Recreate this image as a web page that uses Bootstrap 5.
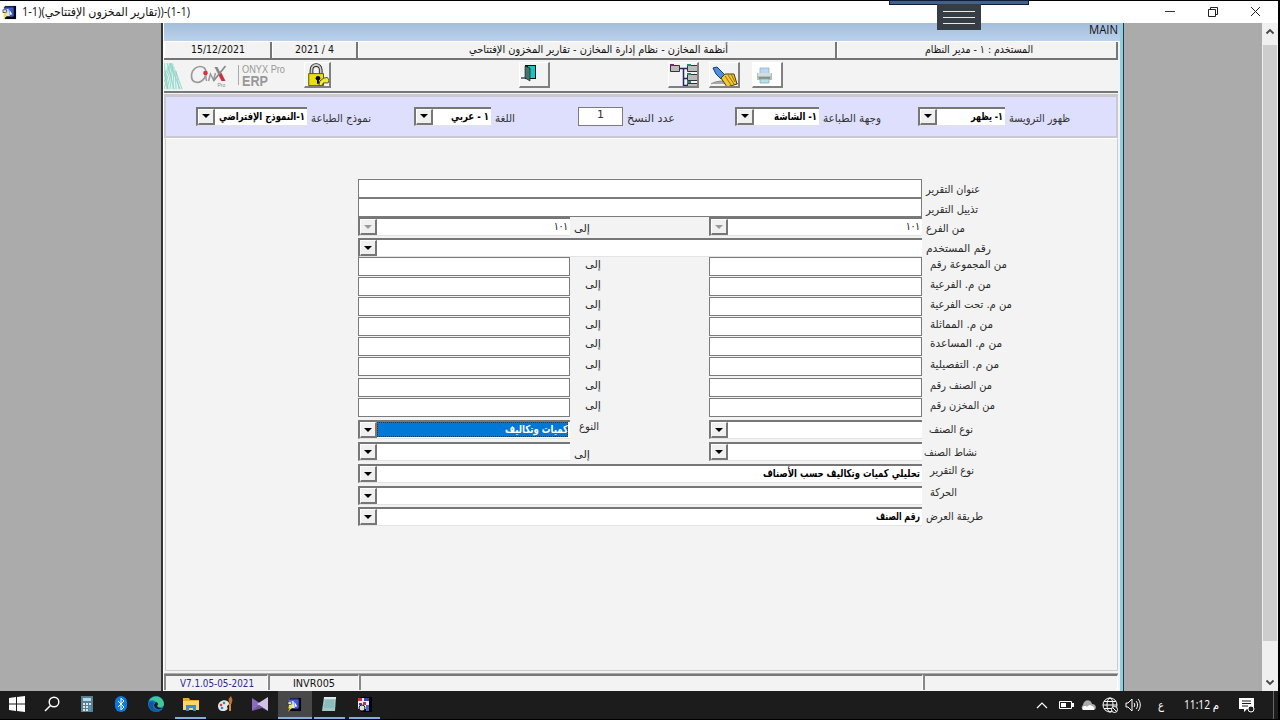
<!DOCTYPE html>
<html lang="ar">
<head>
  <meta charset="UTF-8" />
  <meta name="viewport" content="width=device-width, initial-scale=1.0"/>
  <title>تقارير المخزون الإفتتاحي</title>
  <link href="https://cdn.jsdelivr.net/npm/bootstrap@5.3.0/dist/css/bootstrap.min.css" rel="stylesheet"/>
  <style>
    body { width: 1280px; height: 720px; background: #000; color: #111; font: 11px/1.2 "DejaVu Sans", "Noto Sans", sans-serif; }
    svg { display: block; flex: none; }
    .latin { font-family: "Open Sans", "DejaVu Sans", sans-serif; }

    /* title bar */
    .titlebar { height: 22px; margin-top: 1px; width: 1278px; background: #fff; padding: 0 12px 0 2px; font-size: 12px; }
    .titlebar .fit { margin-left: 5px; }
    .win-buttons { gap: 31px; }
    .top-strip { left: 889px; top: 0; width: 140px; height: 5px; background: #44608f; border: 1px solid #111c38; }
    .top-handle { left: 937px; top: 4px; width: 44px; height: 26px; background: #363d44; padding: 7px 6px 6px; }
    .top-handle i { height: 1px; background: #e8e8e8; }

    /* desktop of the application */
    .desk { height: 668px; width: 1278px; background: #ababab; }
    .erp { width: 963px; margin-left: 161px; background: #f3f3f3; border-left: 2px solid #333; border-right: 1px solid #173f50; }
    .erp-inner { border-right: 3px solid #93ccdb; border-left: 1px solid #fff; }
    .mdi-title { height: 18px; background: linear-gradient(#a3bddb, #bad2ea); padding-right: 2px; font-size: 12px; line-height: 14px; }
    .info-row { height: 19px; background: #f3f3f3; border-bottom: 2px solid #737373; border-top: 1px solid #fff; }
    .info-row > div { border-right: 2px solid #777; border-left: 1px solid #fff; }
    .info-row, .tools, .options, .sheet, .foot { margin-right: 2px; }
    .i1 { width: 108px; } .i2 { width: 86px; } .i3 { width: 479px; padding-left: 2px; }
    .user-cell { padding-left: 4px; }
    .tools { height: 33px; border-bottom: 2px solid #777; padding-top: 2px; }
    .tool-btn { width: 31px; height: 26px; border-right: 2px solid #808080; border-bottom: 2px solid #808080; border-top: 1px solid #fff; border-left: 1px solid #fff; background: #f3f3f3; overflow: hidden; }
    .brand-text { border-left: 1px solid #aaa; padding-left: 3px; color: #989898; font: 10px/10px "Liberation Sans", sans-serif; height: 20px; margin: 3px 0 0 10px; width: 57px; }
    .brand-text b { font-size: 14px; line-height: 12px; }
    .options { height: 44px; margin-top: 1px; background: #dedffc; border: 2px solid #c9c9d4; border-top: 3px solid #c9c9cf; border-left: 2px solid #c9c9cf; padding: 10px 0 0 30px; color: #333; }
    .options label { height: 18px; }
    .opt { height: 18px; }
    .g1 { width: 175px; } .g2 { width: 101px; margin-left: 43px; } .g3 { width: 97px; margin-left: 63px; }
    .g4 { width: 146px; margin-left: 60px; } .g5 { width: 152px; margin-left: 37px; }
    .sheet { height: 533px; margin-left: 1px; border: 1px solid #ccc; border-top-color: #fff; padding: 40px 0 0 192px; }
    .foot { height: 17px; margin-top: 2px; border-top: 1px solid #aaa; }
    .foot > div { border-top: 2px solid #777; border-left: 2px solid #888; border-right: 1px solid #fff; padding-top: 1px; }
    .f1 { width: 104px; } .f2 { width: 91px; } .f3 { width: 564px; }

    /* Forms-style fields */
    .box { height: 19px; background: #fff; border: 1px solid #7b7b7b; }
    .combo { height: 19px; background: #fff; border-top: 2px solid #777; border-left: 2px solid #777; border-bottom: 1px solid #e3e3e3; color: #000; font-weight: bold; }
    .combo .value { padding-right: 2px; }
    .arrow { width: 17px; background: #f0f0f0; border: 1px solid #fff; border-right: 2px solid #777; border-bottom: 2px solid #777; flex: none; }
    .arrow::after { content: ""; border: 4px solid transparent; border-top-color: #000; border-bottom: 0; }
    .arrow.off::after { border-top-color: #999; }
    .picked { background: #0078d7; color: #fff; outline: 1px dotted #333; outline-offset: -1px; margin: 0 2px 1px 0; }
    .lines { display: grid; grid-template-columns: 212px 139px 213px 110px; grid-template-rows: 19px 19px 21px 19px 20px 20px 20px 20px 20px 21px 20px 22px 22px 22px 22px 21px 20px; }
    .wide { grid-column: span 3; }
    .cap { height: 19px; color: #2b2b2b; }
    .fit { display: inline-flex; justify-content: flex-start; white-space: nowrap; flex: none; direction: ltr; }
    .fit > span { transform-origin: 0 50%; flex: none; }

    /* scroll bar and taskbar */
    .scroll { width: 16px; background: #f0f0f0; }
    .thumb { height: 596px; background: #cdcdcd; width: 14px; margin-top: 9px; }
    .taskbar { height: 28px; width: 1278px; background: #1c1c1c; color: #fff; }
    .task { width: 34.7px; height: 28px; border-bottom: 2px solid transparent; }
    .task.open { border-image: linear-gradient(90deg, transparent 12%, #83aede 12% 88%, transparent 88%) 2; border-style: solid; border-width: 0 0 2px; }
    .task.now { background: #484848; border-bottom-color: #83aede; }
    .tray svg { margin-right: 6px; }
    .tray > svg:last-of-type { margin-right: 0; }
    .tray-end { width: 1px; height: 28px; background: #666; margin: 0 4px 0 18px; }

    #lock { margin-left: 9px; width: 27px; } #exit { margin-left: 188px; } #tree { margin-left: 118px; } #clean { margin-left: 10px; } #print { margin-left: 12px; }
    #version { color: #2c2796; }
    #lang { margin-left: 10px; } #clock { margin: 0 20px 0 20px; }
    #clock, #lang { font-size: 12px; }
  </style>
</head>
<body class="overflow-hidden position-relative">
  <svg width="0" height="0" class="position-absolute">
    <symbol id="forms" viewBox="0 0 16 16">
      <path d="M3 1h12v14H3z" fill="#05051c"/><path d="M2 2h10v10H2z" fill="#dce4ff"/><path d="M2 2h10v2H2z" fill="#2638a8"/><path d="M7 4h5v8H8z" fill="#3558e0"/><path d="M8 5l3 5-2 0-1 2z" fill="#fff"/><path d="M1 5h4v3H1z" fill="#ddd" stroke="#222" stroke-width=".7"/><path d="M4 8l-3 4h2l-2 4 5-5H4l2-3z" fill="#f6e611"/>
    </symbol>
  </svg>

  <!-- title bar -->
  <header class="titlebar d-flex align-items-center latin">
    <svg width="15" height="15"><use href="#forms"/></svg>
    <span class="fit" data-w="168"><bdo dir="ltr">1-1)(</bdo><bdi dir="rtl">تقارير المخزون الإفتتاحي</bdi><bdo dir="ltr">))-(1-1)</bdo></span>
    <div class="win-buttons d-flex align-items-center ms-auto me-1">
      <svg width="12" height="12" stroke="#333" fill="none"><path d="M1 5.500h10"/></svg>
      <svg width="12" height="12" stroke="#222" fill="none"><path d="M1.500 3.500h7v7h-7zM3.500 3V1.500h7v7H9"/></svg>
      <svg width="12" height="12" stroke="#222" fill="none"><path d="M1 1l9 9M10 1l-9 9"/></svg>
    </div>
  </header>
  <div class="top-strip position-absolute"></div>
  <div class="top-handle position-absolute d-flex flex-column justify-content-between"><i></i><i></i><i></i></div>

  <div class="desk d-flex">
    <main class="erp">
      <div class="erp-inner h-100">
        <div class="mdi-title text-end latin"><span class="fit" data-w="29">MAIN</span></div>
        <div class="info-row d-flex text-center">
          <div class="i1 d-flex align-items-center justify-content-center"><span class="fit" data-w="54">15/12/2021</span></div>
          <div class="i2 d-flex align-items-center justify-content-center"><span class="fit" data-w="39">2021 / 4</span></div>
          <div class="i3 d-flex align-items-center justify-content-center"><span class="fit" data-w="259"><bdi dir="rtl">أنظمة المخازن - نظام إدارة المخازن - تقارير المخزون الإفتتاحي</bdi></span></div>
          <div class="user-cell flex-grow-1 d-flex align-items-center justify-content-center"><span class="fit" data-w="108"><bdi dir="rtl">المستخدم : ١ - مدير النظام</bdi></span></div>
        </div>
        <div class="tools d-flex">
          <svg width="20" height="28" fill="none" stroke="#8bd0c3" stroke-width=".8"><path d="M0 1h9l3 8 3 10 4 9H0z" fill="#dff3ef" stroke="none"/><path d="M0 27L8 1M3 27L9 2M6 27L9 4M9 27L10 5M12 27L11 8M15 27L12 9M18 27L12 10M0 1l4 26M3 1l7 26M6 1l10 26M0 8l3 19M0 15L6 1M0 20L7 1"/></svg>
          <svg class="ms-1" width="40" height="28" viewBox="0 0 39 28">
            <path d="M16 6C10 2 3 7 3 14c0 7 8 9 13 2 2-3 2-7 0-10" fill="none" stroke="#999" stroke-width="1.700"/>
            <circle cx="17" cy="11" r="2.300" fill="#e02c3c"/><path d="M17 13l1 6M20 19l2-7 3 6 2-7" fill="none" stroke="#999" stroke-width="1.500"/>
            <path d="M26 5l3 0 3 6-2 2z" fill="#888"/><path d="M31 11l2 0 4 8h-4l-3-6z" fill="#d52e3c"/><path d="M37 4L25 19" stroke="#888" stroke-width="1.700"/>
            <text x="29" y="25" font-family="Liberation Sans" font-size="5" fill="#888">Pro</text>
          </svg>
          <div class="brand-text"><span class="fit" data-w="43">ONYX Pro</span><br/><b class="fit" data-w="26">ERP</b></div>
          <div class="tool-btn" id="lock"><svg width="25" height="24" viewBox="0 0 27 25"><path d="M7 13V7c0-7 10-7 10 0v6" fill="none" stroke="#222" stroke-width="4"/><path d="M7 13V7c0-7 10-7 10 0v6" fill="none" stroke="#ccc" stroke-width="2"/><path d="M4 11h16v13H4z" fill="#e9df0a" stroke="#554f00"/><circle cx="14" cy="16" r="2.500"/><path d="M13 17h2v5h-2z"/><path d="M16 19l4-3 4-1 2 3-1 3-5 0-2 3-3 0z" fill="#f4eb2d" stroke="#444"/></svg></div>
          <div class="tool-btn" id="exit"><svg width="29" height="25"><path d="M1 15h15" stroke="#777" stroke-width="2"/><path d="M5 2h11v14H5z" fill="#111"/><path d="M8 3h7v12H8z" fill="#20c2bc"/><path d="M5 3l5 2v13l-5-3z" fill="#43746f" stroke="#111" stroke-width=".6"/></svg></div>
          <div class="tool-btn" id="tree"><svg width="29" height="25"><path d="M10 5.500h9M14.500 5v19M14 15.500h5M14 22.500h5" fill="none" stroke="#24246d" stroke-width="1.500"/><g fill="#bbb" stroke="#333"><path d="M1.500 2.500h9v6h-9zM18.500 2.500h10v6h-10zM18.500 11.500h10v6h-10zM18.500 20.500h10v4h-10z"/></g><path d="M1 1h4v2H1z" fill="#8c1c72"/><path d="M18 1h4v2h-4zM18 10h4v2h-4zM18 18h4v2h-4z" fill="#258976"/></svg></div>
          <div class="tool-btn" id="clean"><svg width="29" height="25"><path d="M1 21c5-4 20-4 27 0" fill="#aaa" stroke="#888"/><path d="M3 5l4-1 8 8-4 4-5-5z" fill="#4a8fe4" stroke="#183878"/><path d="M15 11l9 0 3 10-10 3-6-9z" fill="#f0c83c" stroke="#4d3b04"/><path d="M15 13l6 9M18 12l6 9M21 11l4 8" stroke="#9c6e0b"/></svg></div>
          <div class="tool-btn bg-white" id="print"><svg width="29" height="25"><path d="M7 5h9v7H7z" fill="#b8d9f4" stroke="#8aa8c4" stroke-width=".7"/><path d="M4 10h15v7H4z" fill="#b6bcbc"/><path d="M5 10h13v3H5z" fill="#d8dcda"/><path d="M6 14h11v2H6z" fill="#82958b"/><path d="M7 16h9v4H7z" fill="#b6e0ee" stroke="#86a2aa" stroke-width=".7"/></svg></div>
        </div>
        <div class="options d-flex" id="options"></div>
        <div class="sheet"><div class="lines" id="lines"></div></div>
        <div class="foot d-flex">
          <div class="f1 d-flex justify-content-center align-items-center"><span class="fit" data-w="74" id="version">V7.1.05-05-2021</span></div>
          <div class="f2 d-flex justify-content-center align-items-center"><span class="fit" data-w="42">INVR005</span></div>
          <div class="f3"></div>
          <div class="flex-grow-1"></div>
        </div>
      </div>
    </main>
    <div class="scroll ms-auto d-flex flex-column align-items-center py-1">
      <svg width="10" height="9" fill="none" stroke="#444" stroke-width="1.800"><path d="M1.500 6.500L5 3l3.500 3.500"/></svg>
      <div class="thumb"></div>
      <svg class="mt-auto" width="10" height="9" fill="none" stroke="#444" stroke-width="1.800"><path d="M1.500 2.500L5 6l3.500-3.500"/></svg>
    </div>
  </div>

  <footer class="taskbar d-flex align-items-center">
    <div class="task d-flex align-items-center justify-content-center"><svg width="16" height="16" fill="#fff"><path d="M0 2l7-1v6.500H0zM8 1l8-1v7.500H8zM0 8.500h7V15l-7-1zM8 8.500h8V16l-8-1z"/></svg></div>
    <div class="task d-flex align-items-center justify-content-center"><svg width="16" height="16" fill="none" stroke="#fff" stroke-width="1.400"><circle cx="10" cy="6" r="4.800"/><path d="M6.500 9.500L1 15"/></svg></div>
    <div class="task d-flex align-items-center justify-content-center"><svg width="12" height="16"><path d="M0 0h12v16H0z" fill="#607d8a"/><path d="M2 2h8v3H2z" fill="#a9dcf6"/><path d="M2 7h2v2H2zM5 7h2v2H5zM8 7h2v2H8zM2 10h2v2H2zM5 10h2v2H5zM2 13h2v2H2zM5 13h2v2H5z" fill="#d8e5ec"/><path d="M8 10h2v5H8z" fill="#36a0e2"/></svg></div>
    <div class="task d-flex align-items-center justify-content-center"><svg width="12" height="16"><rect width="12" height="16" rx="6" fill="#0a7ae0"/><path d="M3 5l6 6-3 3V2l3 3-6 6" fill="none" stroke="#fff"/></svg></div>
    <div class="task d-flex align-items-center justify-content-center"><svg width="16" height="16"><circle cx="8" cy="8" r="8" fill="#127ac9"/><path d="M1 5c3-7 14-6 15 3 0 4-6 4-7 2 2-4-4-7-8-5" fill="#42c895"/><path d="M6 7c-3 4 1 9 8 7-7 5-14-1-13-7 1-2 4-2 5 0" fill="#1454a0"/><path d="M8 6c3 1 2 3 1 4 1 2 3 2 5 2-3 3-8 0-8-3z" fill="#1c1c1c"/></svg></div>
    <div class="task open d-flex align-items-center justify-content-center"><svg width="16" height="14"><path d="M0 1h6l1 2h9v10H0z" fill="#e7ab2c"/><path d="M0 4h16v9H0z" fill="#fbd666"/><path d="M3 14V8h10v6h-3v-3H6v3z" fill="#3e8cc8"/></svg></div>
    <div class="task d-flex align-items-center justify-content-center"><svg width="16" height="16"><path d="M1 10c0-6 9-8 11-3 1 2-2 2-2 4 2 2-1 4-4 4s-5-2-5-5" fill="#e2e8ec"/><circle cx="4" cy="9" r="1.300" fill="#d34436"/><circle cx="7" cy="7" r="1.300" fill="#33a05a"/><circle cx="5" cy="12" r="1.300" fill="#3687d0"/><path d="M13 8v7" stroke="#de8736" stroke-width="2"/><path d="M11.500 3L14 0l1.500 4-1 4h-2z" fill="#bb7434"/></svg></div>
    <div class="task d-flex align-items-center justify-content-center"><svg width="16" height="16"><path d="M0 2l9 6-9 7z" fill="#8a6bbf"/><path d="M16 1v14L5 8z" fill="#cfc2e6"/><path d="M0 15l7-6 9 6-6-3z" fill="#77569f"/></svg></div>
    <div class="task now d-flex align-items-center justify-content-center"><svg width="15" height="15"><use href="#forms"/></svg></div>
    <div class="task open d-flex align-items-center justify-content-center"><svg width="15" height="16"><path d="M2 1h12l-1 14H0z" fill="#9fc9c9"/><path d="M2 1h12v2H2z" fill="#dce8e6"/><path d="M3 5h9M3 7h9M2 9h10M2 11h10" stroke="#679e9f" stroke-width=".6"/></svg></div>
    <div class="task open d-flex align-items-center justify-content-center"><svg width="15" height="15"><path d="M3 0h12v15H4z" fill="#000"/><path d="M1 1h11v11H1z" fill="#eee"/><path d="M1 1h4v3H1zM6 5h3v3H6z" fill="#c5304a"/><path d="M7 1h5v3H7zM2 6h3v2H2z" fill="#2d49b3"/><circle cx="5" cy="11" r="3" fill="#ddd" stroke="#222"/><path d="M9 8h3v6H9z" fill="#4168cf"/></svg></div>

    <div class="tray d-flex align-items-center ms-auto">
      <svg width="13" height="10" fill="none" stroke="#fff" stroke-width="1.200"><path d="M1 8l5-5 5 5"/></svg>
      <svg class="ms-1" width="15" height="10"><path d="M.5 1.500h12v7H.5z" fill="none" stroke="#fff"/><path d="M13 3h2v4h-2zM2 3h5v4H2z" fill="#fff"/></svg>
      <svg width="16" height="12"><path d="M3 11a3 3 0 010-5c1-6 8-6 9-1 5 0 5 6 1 6z" fill="#aaa"/><path d="M3 11c-2-4 3-5 4-3 2-4 9 0 7 3z" fill="#fff"/></svg>
      <svg width="17" height="17" fill="none" stroke="#fff"><circle cx="8" cy="8" r="7"/><ellipse cx="8" cy="8" rx="3" ry="7"/><path d="M1 8h14M2 4.500h12M2 11.500h8"/><circle cx="12.500" cy="12.500" r="3" fill="#1c1c1c"/><path d="M10.500 10.500l4 4"/></svg>
      <svg width="17" height="14" fill="none" stroke="#fff"><path d="M1 5h2l4-4v12L3 9H1zM9 5c1 1 1 3 0 4M11 3c2 2 2 6 0 8M13 1c3 3 3 9 0 12"/></svg>
      <span class="fit latin" id="lang" data-w="6">ع</span>
      <span class="fit latin" id="clock" data-w="35">11:12 <bdi>م</bdi></span>
      <svg width="16" height="16"><path d="M0 1h15v11H8l-3 3v-3H0z" fill="#fff"/><path d="M3 4h9M3 6.500h9M3 9h6" stroke="#1c1c1c"/><circle cx="12" cy="12" r="3" fill="#1c1c1c" stroke="#fff"/></svg>
      <div class="tray-end"></div>
    </div>
  </footer>

  <script>
    const ARROW = off => `<div class="arrow ${off ? "off" : ""} d-flex align-items-center justify-content-center"></div>`;

    // w: drawn width of the text in pixels
    function fitText(text, w) {
      return text ? `<span class="fit" data-w="${w}"><bdi dir="rtl">${text}</bdi></span>` : "";
    }

    function combo(text, w, extra = "") {
      const off = extra === "off";
      const area = extra === "picked" ? "picked" : "value";
      return `<div class="combo d-flex flex-grow-1">${ARROW(off)}<div class="flex-grow-1 d-flex align-items-center justify-content-end ${area} ${off ? "fw-normal" : ""}">${fitText(text, w)}</div></div>`;
    }

    const options = [
      ["g1", "١-النموذج الإفتراضي", 86, "نموذج الطباعة", 60],
      ["g2", "١ - عربي", 38, "اللغة", 20],
      ["g3", null, 0, "عدد النسخ", 48],
      ["g4", "١- الشاشة", 43, "وجهة الطباعة", 58],
      ["g5", "١- يظهر", 32, "ظهور الترويسة", 61]
    ];
    document.getElementById("options").innerHTML = options.map(([cls, value, vw, label, lw]) => `
      <div class="opt ${cls} d-flex align-items-center gap-1">
        ${value ? combo(value, vw) : '<div class="box flex-grow-1 text-center">1</div>'}
        <label class="d-flex align-items-end">${fitText(label, lw)}</label>
      </div>`).join("");

    // label, label width, label x offset, label y offset, kind, value, value width, "to" part
    const rows = [
      ["عنوان التقرير", 54, 4, 1, "box"],
      ["تذييل التقرير", 52, 4, 2, "box"],
      ["من الفرع", 39, 4, 2, "pair-off", "١٠١", 14, ["إلى", 16, 4, 2]],
      ["رقم المستخدم", 65, 4, 1, "combo"],
      ["من المجموعة رقم", 77, 8, -2, "pair", "", 0, ["إلى", 16, 15, -2]],
      ["من م. الفرعية", 61, 8, -2, "pair", "", 0, ["إلى", 16, 15, -2]],
      ["من م. تحت الفرعية", 82, 8, -2, "pair", "", 0, ["إلى", 16, 15, -2]],
      ["من م. المماثلة", 63, 8, -2, "pair", "", 0, ["إلى", 16, 15, -2]],
      ["من م. المساعدة", 72, 8, -3, "pair", "", 0, ["إلى", 16, 15, -3]],
      ["من م. التفصيلية", 69, 8, -2, "pair", "", 0, ["إلى", 16, 15, -2]],
      ["من الصنف رقم", 62, 8, -2, "pair", "", 0, ["إلى", 16, 15, -2]],
      ["من المخزن رقم", 65, 8, -2, "pair", "", 0, ["إلى", 16, 15, -2]],
      ["نوع الصنف", 44, 7, 0, "pair-combo", "", 0, ["النوع", 20, 9, -3], "كميات وتكاليف", 63],
      ["نشاط الصنف", 53, 2, 1, "pair-combo", "", 0, ["إلى", 16, 4, 3]],
      ["نوع التقرير", 44, 8, -3, "combo", "تحليلي كميات وتكاليف حسب الأصناف", 157],
      ["الحركة", 27, 8, -3, "combo"],
      ["طريقة العرض", 57, 4, 0, "combo", "رقم الصنف", 44]
    ];

    function caption([text, w, x, y]) {
      return `<div class="cap d-flex align-items-center" style="margin:${y}px 0 0 ${x}px">${fitText(text, w)}</div>`;
    }

    document.getElementById("lines").innerHTML = rows.map(r => {
      const [label, lw, x, y, kind, value = "", vw = 0, to, toValue, toWidth] = r;
      const end = caption([label, lw, x, y]);
      if (kind === "box") return `<div class="box wide"></div>${end}`;
      if (kind === "combo") return `<div class="d-flex wide align-items-start">${combo(value, vw)}</div>${end}`;
      if (kind === "pair") return `<div class="box"></div>${caption(to)}<div class="box"></div>${end}`;
      const off = kind === "pair-off" ? "off" : "";
      return `<div class="d-flex align-items-start">${toValue ? combo(toValue, toWidth, "picked") : combo(value, vw, off)}</div>${caption(to)}
        <div class="d-flex align-items-start">${combo(value, vw, off)}</div>${end}`;
    }).join("");

    // squeeze every caption to its own width
    document.querySelectorAll(".fit").forEach(el => {
      const inner = document.createElement("span");
      inner.append(...el.childNodes);
      el.append(inner);
      const w = Number(el.dataset.w);
      const natural = inner.getBoundingClientRect().width;
      el.style.width = w + "px";
      inner.style.display = "inline-block";
      inner.style.transform = `scaleX(${w / natural})`;
    });
  </script>
  <script src="https://cdn.jsdelivr.net/npm/bootstrap@5.3.0/dist/js/bootstrap.bundle.min.js"></script>
</body>
</html>
